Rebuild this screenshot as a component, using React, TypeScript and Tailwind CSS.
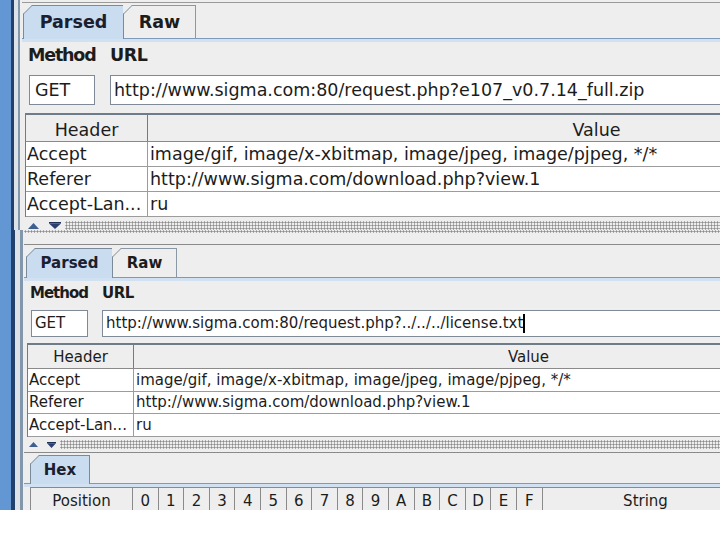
import React from "react";

function Corner() {
  return (
    <svg className="absolute -left-px -top-px" width="9" height="9" viewBox="0 0 9 9">
      <polygon points="0,0 9,0 0,9" fill="#eeeeee" />
      <line x1="0.5" y1="9" x2="9" y2="0.5" stroke="#7a8a99" strokeWidth="1" />
    </svg>
  );
}

function Arrows() {
  return (
    <div className="flex items-center gap-[10px] bg-[#eeeeee] pl-[6px] pr-[4px] h-full">
      <svg width="11" height="6" viewBox="0 0 11 6">
        <polygon points="0,6 5.5,0 11,6" fill="#3d5f93" />
      </svg>
      <svg width="12" height="7" viewBox="0 0 12 7">
        <rect x="0" y="0" width="12" height="1.5" fill="#1f2f55" />
        <polygon points="0,1.5 12,1.5 6,7" fill="#2b3f6e" />
      </svg>
    </div>
  );
}

function ArrowsSmall() {
  return (
    <div className="flex items-center gap-[9px] bg-[#eeeeee] pl-[5px] pr-[4px] h-full">
      <svg width="9" height="5" viewBox="0 0 9 5">
        <polygon points="0,5 4.5,0 9,5" fill="#3d5f93" />
      </svg>
      <svg width="9" height="6" viewBox="0 0 9 6">
        <rect x="0" y="0" width="9" height="1.2" fill="#1f2f55" />
        <polygon points="0,1.2 9,1.2 4.5,6" fill="#2b3f6e" />
      </svg>
    </div>
  );
}

const hexCols = ["0", "1", "2", "3", "4", "5", "6", "7", "8", "9", "A", "B", "C", "D", "E", "F"];

export default function App() {
  return (
    <div className="w-[720px] h-[540px] bg-white overflow-hidden font-['DejaVu_Sans',sans-serif] text-[#1c1c1c]">
      {/* Top screenshot */}
      <div className="flex h-[230px] bg-[#eeeeee]">
        <div className="flex shrink-0">
          <div className="w-[11px] bg-[#6397d4]" />
          <div className="w-[3px] bg-[#22406c]" />
          <div className="w-[4px] bg-[#dde2e8]" />
          <div className="w-[2px] bg-[#8296ac]" />
          <div className="w-[2px] bg-[#eeeeee]" />
        </div>
        <div className="flex-1 min-w-0 overflow-hidden flex flex-col">
          <div className="h-[2px] shrink-0" />
          <div className="h-px shrink-0 bg-[#9a9a9a]" />
          <div className="h-[2px] shrink-0" />
          <div className="flex h-[33px] shrink-0 pl-px relative z-10">
            <div className="relative w-[101px] h-[34px] bg-[#c9dcf0] border border-b-0 border-[#7a8a99] flex items-center justify-center font-bold text-[17.5px] text-[#1a2030]">
              <Corner />
              Parsed
            </div>
            <div className="relative w-[72px] h-[33px] bg-[#eeeeee] border-t border-r border-[#8a98a6] flex items-center justify-center font-bold text-[17.5px]">
              <Corner />
              Raw
            </div>
          </div>
          <div className="h-[4px] shrink-0 border-t border-[#7f9ab8] bg-[#d2e1f1]" />
          <div className="shrink-0 pl-[7px] pt-[3px] grid grid-cols-[66px_700px] gap-x-[15px] text-[17.5px]">
            <div className="font-bold leading-[20px] -ml-px tracking-[-1.2px] whitespace-nowrap">Method</div>
            <div className="font-bold leading-[20px] tracking-[-0.5px]">URL</div>
            <div className="mt-[10px] h-[30px] bg-white border border-[#7f8a96] flex items-center pl-[5px]">GET</div>
            <div className="mt-[10px] h-[30px] bg-white border border-[#7f8a96] flex items-center pl-[3px] whitespace-nowrap">
              http://www.sigma.com:80/request.php?e107_v0.7.14_full.zip
            </div>
          </div>
          <div className="ml-[3px] mt-[8px] w-[1020px] shrink-0 border-t-2 border-l border-[#6e7c8a] bg-white text-[17.5px]">
            <div className="flex h-[27px] bg-[#eeeeee] border-b border-[#8a8a8a]">
              <div className="w-[122px] border-r border-[#6e7c8a] flex items-center justify-center pt-[4px]">Header</div>
              <div className="flex-1 flex items-center justify-center pt-[4px]">Value</div>
            </div>
            <div className="flex h-[25px] border-b border-[#9c9c9c]">
              <div className="w-[122px] border-r border-[#9c9c9c] flex items-center pl-px">Accept</div>
              <div className="flex-1 flex items-center pl-[2px] whitespace-nowrap">image/gif, image/x-xbitmap, image/jpeg, image/pjpeg, */*</div>
            </div>
            <div className="flex h-[25px] border-b border-[#9c9c9c]">
              <div className="w-[122px] border-r border-[#9c9c9c] flex items-center pl-px">Referer</div>
              <div className="flex-1 flex items-center pl-[2px] whitespace-nowrap">http://www.sigma.com/download.php?view.1</div>
            </div>
            <div className="flex h-[25px] border-b border-[#9c9c9c]">
              <div className="w-[122px] border-r border-[#9c9c9c] flex items-center pl-px whitespace-nowrap">Accept-Lan...</div>
              <div className="flex-1 flex items-center pl-[2px]">ru</div>
            </div>
          </div>
          <div className="h-[4px] shrink-0" />
          <div className="flex-1 flex">
            <Arrows />
            <div className="flex-1 bg-[radial-gradient(circle,#8c8c8c_0.9px,transparent_1.2px)] bg-[length:3px_3px]" />
          </div>
        </div>
      </div>

      {/* Bottom screenshot */}
      <div className="flex h-[280px] bg-[#eeeeee]">
        <div className="flex shrink-0">
          <div className="w-[11px] bg-[#6397d4]" />
          <div className="w-[4px] bg-[#22406c]" />
          <div className="w-[5px] bg-[#dde2e8]" />
          <div className="w-[3px] bg-[#8296ac]" />
          <div className="w-px bg-[#eeeeee]" />
        </div>
        <div className="flex-1 min-w-0 overflow-hidden flex flex-col">
          <div className="h-[3px] shrink-0 bg-[radial-gradient(circle,#8c8c8c_0.9px,transparent_1.2px)] bg-[length:3px_3px]" />
          <div className="h-[11px] shrink-0" />
          <div className="h-px shrink-0 bg-[#8a8a8a]" />
          <div className="h-[3px] shrink-0" />
          <div className="flex h-[29px] shrink-0 pl-[2px] relative z-10">
            <div className="relative w-[87px] h-[30px] bg-[#c9dcf0] border border-b-0 border-[#7a8a99] flex items-center justify-center font-bold text-[15px] text-[#1a2030]">
              <Corner />
              Parsed
            </div>
            <div className="relative w-[64px] h-[29px] bg-[#eeeeee] border-t border-r border-[#8a98a6] flex items-center justify-center font-bold text-[15px]">
              <Corner />
              Raw
            </div>
          </div>
          <div className="h-[4px] shrink-0 border-t border-[#7f9ab8] bg-[#d2e1f1]" />
          <div className="shrink-0 pl-[7px] pt-[3px] grid grid-cols-[57px_700px] gap-x-[14px] text-[15px]">
            <div className="font-bold leading-[18px] -ml-px tracking-[-1px] whitespace-nowrap">Method</div>
            <div className="font-bold leading-[18px] tracking-[-0.5px]">URL</div>
            <div className="mt-[8px] h-[27px] bg-white border border-[#7f8a96] flex items-center pl-[3px]">GET</div>
            <div className="mt-[8px] h-[27px] bg-white border border-[#7f8a96] flex items-center pl-[3px] whitespace-nowrap">
              http://www.sigma.com:80/request.php?../../../license.txt
              <span className="inline-block w-[2px] h-[19px] bg-black" />
            </div>
          </div>
          <div className="ml-[3px] mt-[6px] w-[896px] shrink-0 border-t-2 border-l border-[#6e7c8a] bg-white text-[15px]">
            <div className="flex h-[24px] bg-[#eeeeee] border-b border-[#8a8a8a]">
              <div className="w-[106px] border-r border-[#6e7c8a] flex items-center justify-center pt-[2px]">Header</div>
              <div className="flex-1 flex items-center justify-center pt-[2px]">Value</div>
            </div>
            <div className="flex h-[23px] border-b border-[#9c9c9c]">
              <div className="w-[106px] border-r border-[#9c9c9c] flex items-center pl-px">Accept</div>
              <div className="flex-1 flex items-center pl-[2px] whitespace-nowrap">image/gif, image/x-xbitmap, image/jpeg, image/pjpeg, */*</div>
            </div>
            <div className="flex h-[22px] border-b border-[#9c9c9c]">
              <div className="w-[106px] border-r border-[#9c9c9c] flex items-center pl-px">Referer</div>
              <div className="flex-1 flex items-center pl-[2px] whitespace-nowrap">http://www.sigma.com/download.php?view.1</div>
            </div>
            <div className="flex h-[23px] border-b border-[#9c9c9c]">
              <div className="w-[106px] border-r border-[#9c9c9c] flex items-center pl-px whitespace-nowrap">Accept-Lan...</div>
              <div className="flex-1 flex items-center pl-[2px]">ru</div>
            </div>
          </div>
          <div className="h-[3px] shrink-0" />
          <div className="h-[9px] shrink-0 flex">
            <ArrowsSmall />
            <div className="flex-1 bg-[radial-gradient(circle,#8c8c8c_0.9px,transparent_1.2px)] bg-[length:3px_3px]" />
          </div>
          <div className="h-[3px] shrink-0" />
          <div className="h-px shrink-0 bg-[#8a8a8a]" />
          <div className="h-[2px] shrink-0" />
          <div className="flex h-[28px] shrink-0 pl-[6px] relative z-10">
            <div className="relative w-[60px] h-[29px] bg-[#c9dcf0] border border-b-0 border-[#7a8a99] flex items-center justify-center font-bold text-[15px] text-[#1a2030]">
              <Corner />
              Hex
            </div>
          </div>
          <div className="h-[4px] shrink-0 border-t border-[#7f9ab8] bg-[#d2e1f1]" />
          <div className="ml-[6px] shrink-0 grid grid-cols-[102px_repeat(16,25.6px)_206px] h-[24px] bg-[#eeeeee] border-l border-t border-[#8a8a8a] text-[15px]">
            <div className="border-r border-[#8a8a8a] flex items-center justify-center pt-[2px]">Position</div>
            {hexCols.map((c) => (
              <div key={c} className="border-r border-[#8a8a8a] flex items-center justify-center pt-[2px]">
                {c}
              </div>
            ))}
            <div className="flex items-center justify-center pt-[2px]">String</div>
          </div>
        </div>
      </div>
    </div>
  );
}
